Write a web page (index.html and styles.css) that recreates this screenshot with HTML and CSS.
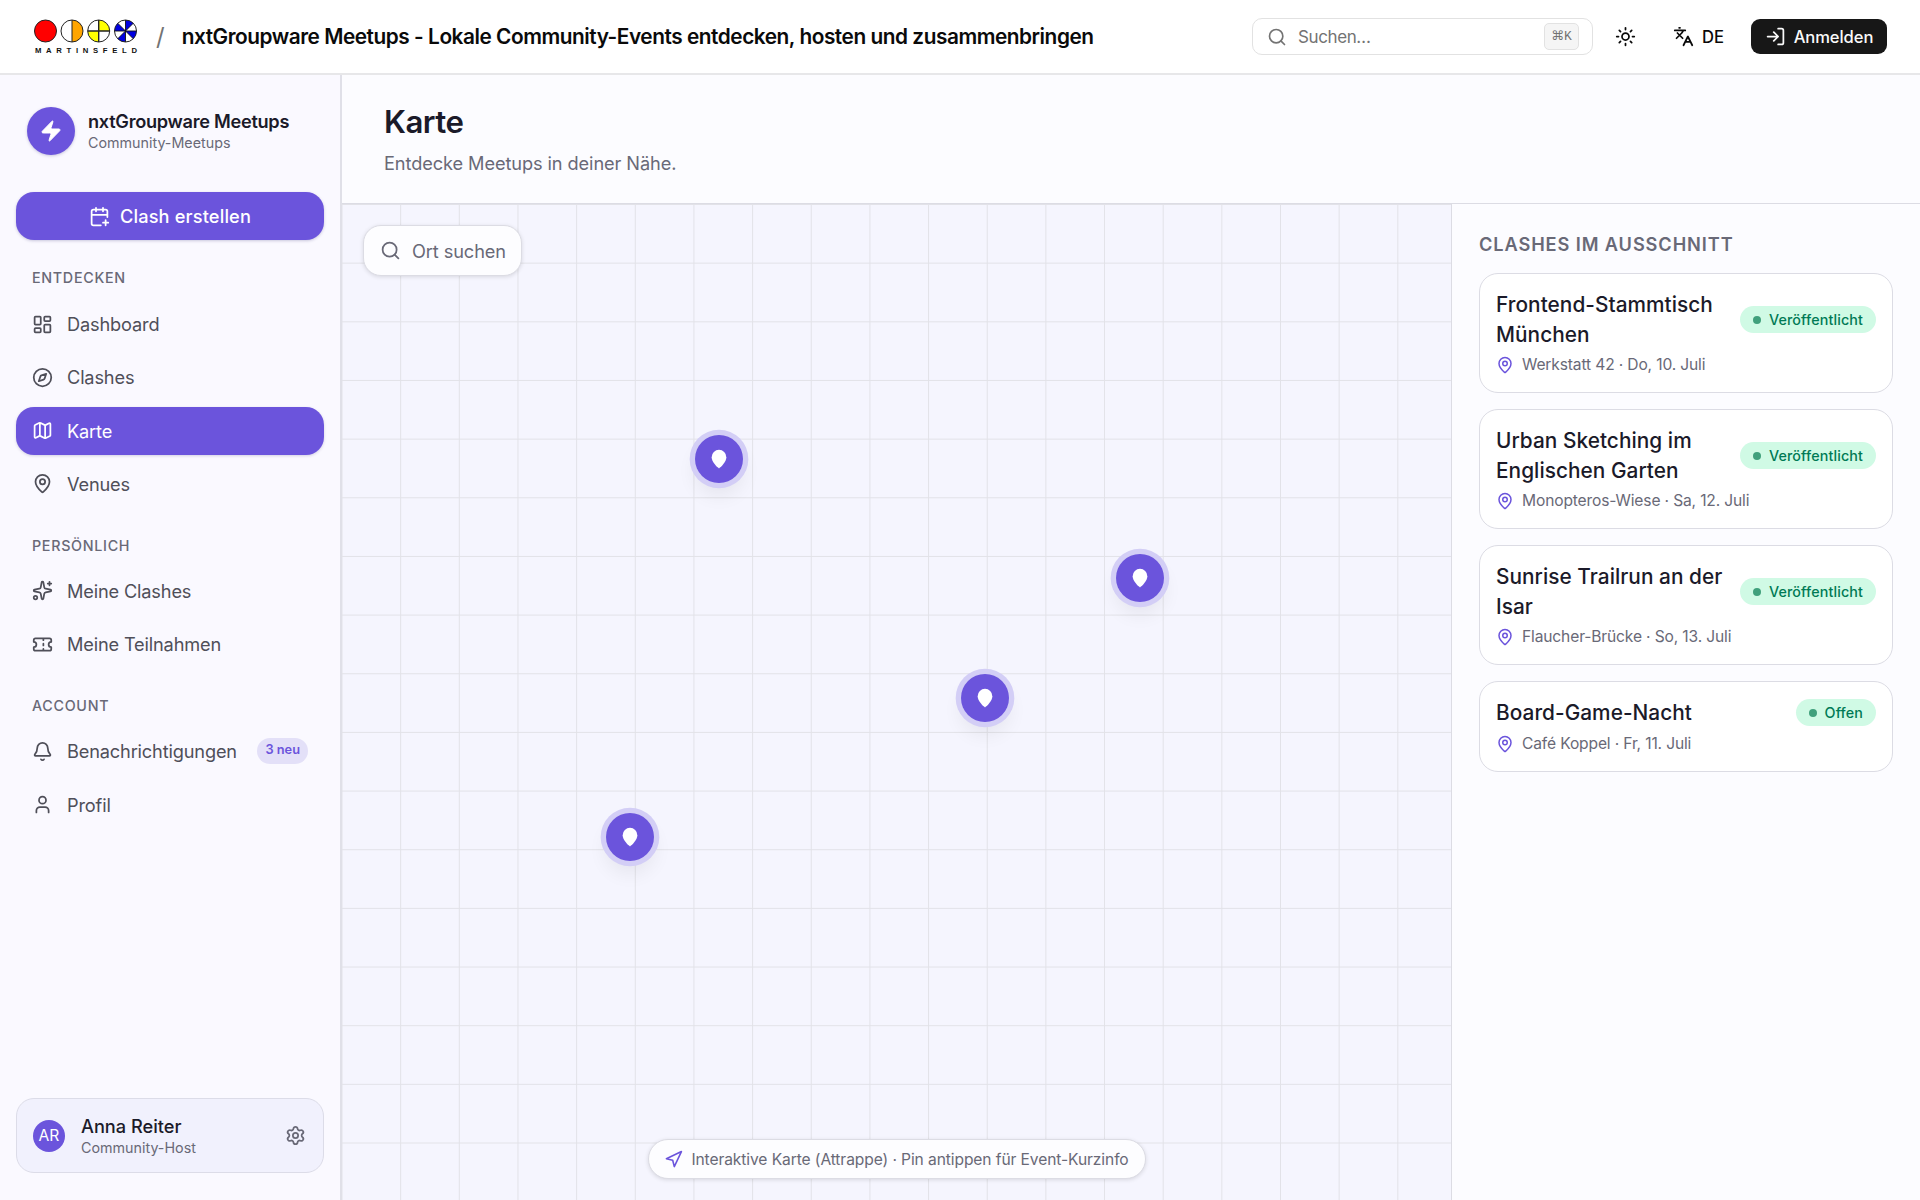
FILE: index.html
```
<!DOCTYPE html>
<html lang="de">
<head>
    <meta charset="UTF-8">
    <meta name="viewport" content="width=device-width, initial-scale=1.0">
    <title>nxtGroupware Meetups - Karte</title>
    <link rel="stylesheet" href="styles.css">
</head>
<body>
    <!-- Icons -->
    <svg class="sprite" aria-hidden="true">
        <symbol id="i-search" viewBox="0 0 24 24"><path d="m21 21-4.34-4.34"/><circle cx="11" cy="11" r="8"/></symbol>
        <symbol id="i-sun" viewBox="0 0 24 24"><circle cx="12" cy="12" r="4"/><path d="M12 2v2M12 20v2m-7.07-17.07 1.41 1.41m11.32 11.32 1.41 1.41M2 12h2m16 0h2M6.34 17.66l-1.41 1.41M19.07 4.93l-1.41 1.41"/></symbol>
        <symbol id="i-languages" viewBox="0 0 24 24"><path d="m5 8 6 6m-7 0 6-6 2-3M2 5h12M7 2h1m14 20-5-10-5 10m2-4h6"/></symbol>
        <symbol id="i-login" viewBox="0 0 24 24"><path d="m10 17 5-5-5-5m5 5H3M15 3h4a2 2 0 0 1 2 2v14a2 2 0 0 1-2 2h-4"/></symbol>
        <symbol id="i-zap" viewBox="0 0 24 24"><path d="M4 14a1 1 0 0 1-.78-1.63l9.9-10.2a.5.5 0 0 1 .86.46l-1.92 6.02A1 1 0 0 0 13 10h7a1 1 0 0 1 .78 1.63l-9.9 10.2a.5.5 0 0 1-.86-.46l1.92-6.02A1 1 0 0 0 11 14z"/></symbol>
        <symbol id="i-calendar-plus" viewBox="0 0 24 24"><path d="M16 19h6M16 2v4m3 10v6m2-9.402V6a2 2 0 0 0-2-2H5a2 2 0 0 0-2 2v14a2 2 0 0 0 2 2h8.5M3 10h18M8 2v4"/></symbol>
        <symbol id="i-dashboard" viewBox="0 0 24 24"><rect width="7" height="9" x="3" y="3" rx="1"/><rect width="7" height="5" x="14" y="3" rx="1"/><rect width="7" height="9" x="14" y="12" rx="1"/><rect width="7" height="5" x="3" y="16" rx="1"/></symbol>
        <symbol id="i-compass" viewBox="0 0 24 24"><circle cx="12" cy="12" r="10"/><path d="m16.24 7.76-1.804 5.411a2 2 0 0 1-1.265 1.265L7.76 16.24l1.804-5.411a2 2 0 0 1 1.265-1.265z"/></symbol>
        <symbol id="i-map" viewBox="0 0 24 24"><path d="M14.106 5.553a2 2 0 0 0 1.788 0l3.659-1.83A1 1 0 0 1 21 4.619v12.764a1 1 0 0 1-.553.894l-4.553 2.277a2 2 0 0 1-1.788 0l-4.212-2.106a2 2 0 0 0-1.788 0l-3.659 1.83A1 1 0 0 1 3 19.381V6.618a1 1 0 0 1 .553-.894l4.553-2.277a2 2 0 0 1 1.788 0zM15 5.764v15M9 3.236v15"/></symbol>
        <symbol id="i-pin" viewBox="0 0 24 24"><path d="M20 10c0 4.993-5.539 10.193-7.399 11.799a1 1 0 0 1-1.202 0C9.539 20.193 4 14.993 4 10a8 8 0 0 1 16 0"/><circle cx="12" cy="10" r="3"/></symbol>
        <symbol id="i-sparkles" viewBox="0 0 24 24"><path d="M11.017 2.814a1 1 0 0 1 1.966 0l1.051 5.558a2 2 0 0 0 1.594 1.594l5.558 1.051a1 1 0 0 1 0 1.966l-5.558 1.051a2 2 0 0 0-1.594 1.594l-1.051 5.558a1 1 0 0 1-1.966 0l-1.051-5.558a2 2 0 0 0-1.594-1.594l-5.558-1.051a1 1 0 0 1 0-1.966l5.558-1.051a2 2 0 0 0 1.594-1.594zM20 2v4m2-2h-4"/><circle cx="4" cy="20" r="2"/></symbol>
        <symbol id="i-ticket" viewBox="0 0 24 24"><path d="M2 9a3 3 0 0 1 0 6v2a2 2 0 0 0 2 2h16a2 2 0 0 0 2-2v-2a3 3 0 0 1 0-6V7a2 2 0 0 0-2-2H4a2 2 0 0 0-2 2ZM13 5v2m0 10v2m0-8v2"/></symbol>
        <symbol id="i-bell" viewBox="0 0 24 24"><path d="M10.268 21a2 2 0 0 0 3.464 0M3.262 15.326A1 1 0 0 0 4 17h16a1 1 0 0 0 .74-1.673C19.41 13.956 18 12.499 18 8A6 6 0 0 0 6 8c0 4.499-1.411 5.956-2.738 7.326"/></symbol>
        <symbol id="i-user" viewBox="0 0 24 24"><path d="M19 21v-2a4 4 0 0 0-4-4H9a4 4 0 0 0-4 4v2"/><circle cx="12" cy="7" r="4"/></symbol>
        <symbol id="i-settings" viewBox="0 0 24 24"><path d="M9.671 4.136a2.34 2.34 0 0 1 4.659 0 2.34 2.34 0 0 0 3.319 1.915 2.34 2.34 0 0 1 2.33 4.033 2.34 2.34 0 0 0 0 3.831 2.34 2.34 0 0 1-2.33 4.033 2.34 2.34 0 0 0-3.319 1.915 2.34 2.34 0 0 1-4.659 0 2.34 2.34 0 0 0-3.32-1.915 2.34 2.34 0 0 1-2.33-4.033 2.34 2.34 0 0 0 0-3.831A2.34 2.34 0 0 1 6.35 6.051a2.34 2.34 0 0 0 3.319-1.915"/><circle cx="12" cy="12" r="3"/></symbol>
        <symbol id="i-navigation" viewBox="0 0 24 24"><polygon points="3 11 22 2 13 21 11 13 3 11"/></symbol>
    </svg>

    <header class="topbar">
        <svg class="logo" viewBox="0 0 104 36">
            <circle cx="11.5" cy="12" r="11" fill="#f00" stroke="#222"/>
            <circle cx="38" cy="12" r="11" fill="#fff"/>
            <path d="M38 1a11 11 0 0 1 0 22z" fill="#ffa500"/>
            <path d="M38 1v22" stroke="#222"/>
            <circle cx="38" cy="12" r="11" fill="none" stroke="#222"/>
            <circle cx="64.7" cy="12" r="11" fill="#fff"/>
            <path d="M64.7 12V1a11 11 0 0 1 11 11zM64.7 12v11a11 11 0 0 1-11-11z" fill="#ff0"/>
            <path d="M64.7 1v22M53.7 12h22" stroke="#222" stroke-width="1.4"/>
            <circle cx="64.7" cy="12" r="11" fill="none" stroke="#222"/>
            <circle cx="91.5" cy="12" r="11" fill="#fff"/>
            <path d="M91.5 12V1a11 11 0 0 1 7.8 3.2zM91.5 12h11a11 11 0 0 1-3.2 7.8zM91.5 12v11a11 11 0 0 1-7.8-3.2zM91.5 12h-11a11 11 0 0 1 3.2-7.8z" fill="#0000e0"/>
            <path d="M91.5 1v22M80.5 12h22M83.7 4.2l15.6 15.6M99.3 4.2 83.7 19.8" stroke="#111" stroke-width=".9"/>
            <circle cx="91.5" cy="12" r="11" fill="none" stroke="#222"/>
            <text x="1" y="34.3" textLength="102">MARTINSFELD</text>
        </svg>
        <span class="slash">/</span>
        <span class="site-title">nxtGroupware Meetups - Lokale Community-Events entdecken, hosten und zusammenbringen</span>
        <div class="search">
            <svg class="icon"><use href="#i-search"/></svg>
            <span class="search-text">Suchen…</span>
            <kbd>⌘K</kbd>
        </div>
        <button class="theme"><svg class="icon"><use href="#i-sun"/></svg></button>
        <button class="lang"><svg class="icon"><use href="#i-languages"/></svg>DE</button>
        <button class="login"><svg class="icon"><use href="#i-login"/></svg>Anmelden</button>
    </header>

    <div class="layout">
        <aside class="sidebar">
            <div class="brand">
                <div class="brand-icon"><svg class="icon"><use href="#i-zap"/></svg></div>
                <div>
                    <div class="brand-name">nxtGroupware Meetups</div>
                    <div class="brand-sub">Community-Meetups</div>
                </div>
            </div>
            <button class="create"><svg class="icon"><use href="#i-calendar-plus"/></svg>Clash erstellen</button>

            <nav>
                <div class="nav-label">Entdecken</div>
                <a class="nav-item"><svg class="icon"><use href="#i-dashboard"/></svg>Dashboard</a>
                <a class="nav-item"><svg class="icon"><use href="#i-compass"/></svg>Clashes</a>
                <a class="nav-item active"><svg class="icon"><use href="#i-map"/></svg>Karte</a>
                <a class="nav-item"><svg class="icon"><use href="#i-pin"/></svg>Venues</a>

                <div class="nav-label">Persönlich</div>
                <a class="nav-item"><svg class="icon"><use href="#i-sparkles"/></svg>Meine Clashes</a>
                <a class="nav-item"><svg class="icon"><use href="#i-ticket"/></svg>Meine Teilnahmen</a>

                <div class="nav-label">Account</div>
                <a class="nav-item"><svg class="icon"><use href="#i-bell"/></svg>Benachrichtigungen<b class="badge-new">3 neu</b></a>
                <a class="nav-item"><svg class="icon"><use href="#i-user"/></svg>Profil</a>
            </nav>

            <div class="user">
                <div class="avatar">AR</div>
                <div>
                    <div class="user-name">Anna Reiter</div>
                    <div class="user-role">Community-Host</div>
                </div>
                <svg class="icon"><use href="#i-settings"/></svg>
            </div>
        </aside>

        <main>
            <div class="page-head">
                <h1>Karte</h1>
                <p>Entdecke Meetups in deiner Nähe.</p>
            </div>
            <div class="content">
                <section class="map">
                    <div class="place-search"><svg class="icon"><use href="#i-search"/></svg>Ort suchen</div>
                    <div class="pin pin-1"><svg class="icon"><use href="#i-pin"/></svg></div>
                    <div class="pin pin-2"><svg class="icon"><use href="#i-pin"/></svg></div>
                    <div class="pin pin-3"><svg class="icon"><use href="#i-pin"/></svg></div>
                    <div class="pin pin-4"><svg class="icon"><use href="#i-pin"/></svg></div>
                    <div class="hint"><svg class="icon"><use href="#i-navigation"/></svg>Interaktive Karte (Attrappe) · Pin antippen für Event-Kurzinfo</div>
                </section>

                <section class="list">
                    <h2>Clashes im Ausschnitt</h2>
                    <article class="card">
                        <div class="card-top"><h3>Frontend-Stammtisch München</h3><div class="status">Veröffentlicht</div></div>
                        <div class="meta"><svg class="icon"><use href="#i-pin"/></svg>Werkstatt 42 · Do, 10. Juli</div>
                    </article>
                    <article class="card">
                        <div class="card-top"><h3>Urban Sketching im Englischen Garten</h3><div class="status">Veröffentlicht</div></div>
                        <div class="meta"><svg class="icon"><use href="#i-pin"/></svg>Monopteros-Wiese · Sa, 12. Juli</div>
                    </article>
                    <article class="card">
                        <div class="card-top"><h3>Sunrise Trailrun an der Isar</h3><div class="status">Veröffentlicht</div></div>
                        <div class="meta"><svg class="icon"><use href="#i-pin"/></svg>Flaucher-Brücke · So, 13. Juli</div>
                    </article>
                    <article class="card">
                        <div class="card-top"><h3>Board-Game-Nacht</h3><div class="status">Offen</div></div>
                        <div class="meta"><svg class="icon"><use href="#i-pin"/></svg>Café Koppel · Fr, 11. Juli</div>
                    </article>
                </section>
            </div>
        </main>
    </div>
</body>
</html>
```
FILE: styles.css
```
* {
    box-sizing: border-box;
}
body {
    margin: 0;
    height: 1200px;
    overflow: hidden;
    display: flex;
    flex-direction: column;
    font-family: Inter, "Liberation Sans", sans-serif;
    font-size: 18.2px;
    color: #1b1a29;
    background: #fcfcff;
}
h1, h2, h3, p {
    margin: 0;
}
button {
    border: none;
    background: none;
    padding: 0;
    font: inherit;
    color: inherit;
}
.sprite {
    position: absolute;
    width: 0;
    height: 0;
}
.icon {
    width: 21px;
    height: 21px;
    flex-shrink: 0;
    fill: none;
    stroke: currentColor;
    stroke-width: 2;
    stroke-linecap: round;
    stroke-linejoin: round;
}

/* Topbar */
.topbar {
    height: 75px;
    flex-shrink: 0;
    display: flex;
    align-items: center;
    padding: 0 33px 0 34px;
    background: #fff;
    border-bottom: 2px solid #e7e7e9;
    color: #0a0a0a;
}
.logo {
    width: 104px;
    height: 36px;
}
.logo text {
    font: bold 7.7px "Liberation Sans", sans-serif;
    fill: #111;
}
.slash {
    margin-left: 18px;
    font-size: 24px;
    color: #737373;
}
.site-title {
    margin-left: 17px;
    font-size: 20.8px;
    font-weight: 600;
    letter-spacing: -0.45px;
    white-space: nowrap;
}
.search {
    width: 341px;
    height: 37px;
    margin-left: auto;
    padding: 0 13px 0 14px;
    display: flex;
    align-items: center;
    border: 1px solid #e2e2e2;
    border-radius: 10px;
    color: #737373;
}
.search .icon {
    width: 20px;
    height: 20px;
}
.search-text {
    flex: 1;
    margin-left: 11px;
    font-size: 17px;
    letter-spacing: -0.4px;
}
kbd {
    width: 35px;
    height: 27px;
    border: 1px solid #e2e2e2;
    border-radius: 5px;
    background: #f5f5f5;
    font: 500 13px/25px "Liberation Mono", "DejaVu Sans", monospace;
    text-align: center;
}
.theme, .lang, .login {
    display: flex;
    align-items: center;
}
.theme {
    margin-left: 22px;
}
.lang {
    margin-left: 37px;
    gap: 8px;
    font-size: 16.6px;
    font-weight: 500;
}
.login {
    width: 136px;
    height: 35px;
    margin-left: 27px;
    justify-content: center;
    gap: 8px;
    border-radius: 9px;
    background: #171717;
    color: #fafafa;
    font-size: 16.6px;
    font-weight: 500;
    letter-spacing: -0.1px;
}

/* Sidebar */
.layout {
    flex: 1;
    display: flex;
    min-height: 0;
}
.sidebar {
    width: 342px;
    flex-shrink: 0;
    display: flex;
    flex-direction: column;
    padding: 32px 16px 27px;
    border-right: 2px solid #e0e0e8;
    background: #faf9ff;
}
.brand {
    height: 48px;
    padding-left: 11px;
    display: flex;
    align-items: center;
    gap: 13px;
}
.brand-icon {
    width: 48px;
    height: 48px;
    display: flex;
    align-items: center;
    justify-content: center;
    border-radius: 50%;
    background: #6b54dc;
    color: #fff;
    box-shadow: 0 1px 3px rgba(60, 50, 120, .25);
}
.brand-icon .icon {
    width: 24px;
    height: 24px;
    fill: #fff;
    stroke-width: 1;
}
.brand-name {
    font-weight: 600;
    line-height: 23px;
    letter-spacing: -0.29px;
}
.brand-sub, .user-role {
    font-size: 14.3px;
    line-height: 20px;
    color: #696977;
}
.create {
    height: 48px;
    margin-top: 37px;
    display: flex;
    align-items: center;
    justify-content: center;
    gap: 10px;
    border-radius: 18px;
    background: #6b54dc;
    color: #fff;
    font-weight: 500;
    letter-spacing: 0.15px;
    box-shadow: 0 1px 3px rgba(60, 50, 120, .25);
}
.nav-label {
    height: 48px;
    margin-top: 11px;
    padding: 17px 16px 0;
    font-size: 14.3px;
    line-height: 20px;
    font-weight: 500;
    letter-spacing: 0.7px;
    text-transform: uppercase;
    color: #696977;
}
.nav-label:first-child {
    margin-top: 12px;
    padding-top: 15.5px;
}
.nav-item {
    height: 48px;
    margin-bottom: 5.33px;
    padding: 0 16px;
    display: flex;
    align-items: center;
    gap: 14px;
    border-radius: 18px;
    color: #4f4f59;
    letter-spacing: -0.16px;
}
.nav-item.active {
    background: #6b54dc;
    color: #fff;
    box-shadow: 0 1px 3px rgba(60, 50, 120, .2);
}
.badge-new {
    height: 26px;
    margin-left: auto;
    padding: 0 8px;
    border-radius: 13px;
    background: #e3e0f8;
    color: #6b54dc;
    font-size: 12.8px;
    line-height: 24px;
    font-weight: 600;
    letter-spacing: 0;
    white-space: nowrap;
}
.user {
    height: 75px;
    margin-top: auto;
    padding: 0 17px 0 16px;
    display: flex;
    align-items: center;
    border: 1px solid #dcdce8;
    border-radius: 18px;
    background: #f1f1fd;
}
.avatar {
    width: 32px;
    height: 32px;
    margin-right: 16px;
    display: flex;
    align-items: center;
    justify-content: center;
    border-radius: 50%;
    background: #6b54dc;
    color: #fff;
    font-size: 15.6px;
}
.user-name {
    margin-top: 2px;
    line-height: 23px;
    font-weight: 500;
}
.user .icon {
    margin-left: auto;
    color: #696977;
}

/* Main */
main {
    flex: 1;
    min-width: 0;
    display: flex;
    flex-direction: column;
}
.page-head {
    height: 129px;
    padding: 26px 42px 0;
    border-bottom: 1px solid #dcdce4;
}
h1 {
    font-size: 31.2px;
    line-height: 43px;
    font-weight: 600;
    letter-spacing: -0.5px;
}
.page-head p {
    margin-top: 6px;
    line-height: 27px;
    letter-spacing: -0.09px;
    color: #696977;
}
.content {
    flex: 1;
    display: flex;
}
.map {
    position: relative;
    flex: 1;
    background-color: #f5f5fe;
    background-image:
        linear-gradient(to right, #e2e2e8 1.33px, transparent 1.33px),
        linear-gradient(to bottom, #e2e2e8 1.33px, transparent 1.33px);
    background-size: 58.67px 58.67px;
    background-position: -0.5px 0;
}
.place-search {
    position: absolute;
    left: 21px;
    top: 21px;
    width: 159px;
    height: 51px;
    display: flex;
    align-items: center;
    padding-left: 16px;
    gap: 11px;
    border: 1px solid #dcdce4;
    border-radius: 18px;
    background: #fdfdff;
    color: #696977;
    letter-spacing: -0.1px;
    box-shadow: 0 1px 4px rgba(0, 0, 0, .12);
}
.pin {
    position: absolute;
    width: 48px;
    height: 48px;
    display: flex;
    align-items: center;
    justify-content: center;
    border-radius: 50%;
    background: #6b54dc;
    color: #fff;
    transform: translate(-50%, -100%);
    box-shadow: 0 0 0 5.33px #d3cef6, 0 12px 20px rgba(0, 0, 0, .07);
}
.pin .icon {
    width: 22px;
    height: 22px;
    fill: #fff;
    stroke: none;
}
.pin-1 { left: 34%; top: 28%; }
.pin-2 { left: 72%; top: 40%; }
.pin-3 { left: 58%; top: 52%; }
.pin-4 { left: 26%; top: 66%; }
.hint {
    position: absolute;
    left: 50%;
    bottom: 21px;
    width: 498px;
    height: 40px;
    transform: translateX(-50%);
    display: flex;
    align-items: center;
    justify-content: center;
    gap: 8px;
    border: 1px solid #dcdce4;
    border-radius: 20px;
    background: #fdfdff;
    color: #696977;
    font-size: 15.6px;
    letter-spacing: -0.1px;
    white-space: nowrap;
    box-shadow: 0 1px 4px rgba(0, 0, 0, .12);
}
.hint .icon {
    width: 19px;
    height: 19px;
    color: #6b54dc;
}

/* Liste */
.list {
    width: 469px;
    padding: 27.33px 27px 0 27px;
    border-left: 1px solid #dcdce4;
}
h2 {
    margin-bottom: 16px;
    font-size: 18.2px;
    line-height: 26px;
    font-weight: 600;
    letter-spacing: 0.9px;
    text-transform: uppercase;
    color: #696977;
}
.card {
    margin-bottom: 16px;
    padding: 16px;
    border: 1px solid #dcdce4;
    border-radius: 19px;
    background: #fff;
}
.card-top {
    display: flex;
    align-items: center;
    justify-content: space-between;
    gap: 8px;
}
h3 {
    font-size: 20.8px;
    line-height: 29.33px;
    font-weight: 500;
    letter-spacing: 0.05px;
}
.status {
    height: 27px;
    flex-shrink: 0;
    padding: 0 13px;
    display: flex;
    align-items: center;
    gap: 8px;
    border-radius: 14px;
    background: #d0fae5;
    color: #007a55;
    font-size: 14.3px;
    font-weight: 500;
    letter-spacing: 0.12px;
}
.status::before {
    content: "";
    width: 8px;
    height: 8px;
    border-radius: 50%;
    background: #40a07c;
}
.meta {
    margin-top: 5.33px;
    display: flex;
    align-items: center;
    gap: 8px;
    font-size: 15.6px;
    line-height: 22px;
    letter-spacing: -0.15px;
    color: #696977;
}
.meta .icon {
    width: 18px;
    height: 18px;
    color: #6b54dc;
}
```
